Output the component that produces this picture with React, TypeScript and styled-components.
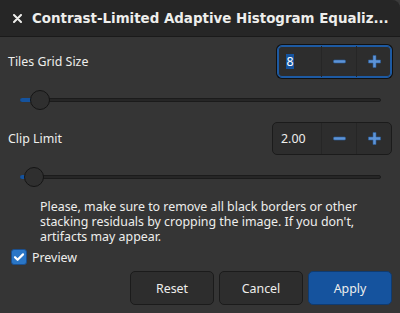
import styled, { createGlobalStyle } from 'styled-components';

const GlobalStyle = createGlobalStyle`
  html, body {
    margin: 0;
    padding: 0;
    background: #3a3a3a;
  }
  * {
    box-sizing: border-box;
  }
`;

function SpinButton({ value, focused, width }: { value: string; focused?: boolean; width: number }) {
  return (
    <Spin $focused={focused}>
      <SpinEntry $width={width}>{focused ? <Selected>{value}</Selected> : value}</SpinEntry>
      <SpinBtn>
        <svg width="13" height="13" viewBox="0 0 13 13">
          <rect x="0.5" y="5" width="12" height="3" rx="1" fill="#5d93d6" stroke="#2c5f9e" strokeWidth="0.6" />
        </svg>
      </SpinBtn>
      <SpinBtn>
        <svg width="13" height="13" viewBox="0 0 13 13">
          <path d="M5 0.5h3v4.5h4.5v3H8v4.5H5V8H0.5V5H5z" fill="#5d93d6" stroke="#2c5f9e" strokeWidth="0.6" />
        </svg>
      </SpinBtn>
    </Spin>
  );
}

function Slider({ knob, height }: { knob: number; height: number }) {
  return (
    <SliderRow $height={height}>
      <Track>
        <Fill $width={knob} />
        <Knob $left={knob} />
      </Track>
    </SliderRow>
  );
}

export default function App() {
  return (
    <>
      <GlobalStyle />
      <Dialog>
        <TitleBar>
          <Close>
            <svg width="9" height="9" viewBox="0 0 9 9">
              <path d="M1 1l7 7M8 1L1 8" stroke="#eeeeec" strokeWidth="2" strokeLinecap="round" />
            </svg>
          </Close>
          <Title>Contrast-Limited Adaptive Histogram Equaliz...</Title>
        </TitleBar>
        <Content>
          <SettingRow>
            <Label>Tiles Grid Size</Label>
            <SpinButton value="8" focused width={43} />
          </SettingRow>
          <Slider knob={19} height={44} />
          <SettingRow>
            <Label>Clip Limit</Label>
            <SpinButton value="2.00" width={48} />
          </SettingRow>
          <Slider knob={13} height={43} />
          <Note>
            Please, make sure to remove all black borders or other
            <br />
            stacking residuals by cropping the image. If you don't,
            <br />
            artifacts may appear.
          </Note>
          <CheckRow>
            <CheckBox>
              <svg width="12" height="12" viewBox="0 0 12 12">
                <path d="M2 6.2l2.6 2.6L10 3.4" stroke="#ffffff" strokeWidth="2.2" fill="none" strokeLinecap="round" strokeLinejoin="round" />
              </svg>
            </CheckBox>
            <Label>Preview</Label>
          </CheckRow>
          <ButtonRow>
            <Button>Reset</Button>
            <Button>Cancel</Button>
            <Button $primary>Apply</Button>
          </ButtonRow>
        </Content>
      </Dialog>
    </>
  );
}

const Dialog = styled.div`
  width: 400px;
  height: 313px;
  background: #353535;
  border-top-right-radius: 8px;
  overflow: hidden;
  display: flex;
  flex-direction: column;
  font-family: 'Noto Sans', 'Open Sans', sans-serif;
  color: #eeeeec;
`;

const TitleBar = styled.div`
  height: 37px;
  flex-shrink: 0;
  background: #262626;
  border-bottom: 1px solid #1a1a1a;
  display: flex;
  align-items: center;
  padding-left: 13px;
  gap: 10px;
`;

const Close = styled.div`
  width: 9px;
  height: 9px;
  display: flex;
`;

const Title = styled.div`
  font-family: 'DejaVu Sans', sans-serif;
  font-weight: bold;
  font-size: 13.4px;
  white-space: nowrap;
  color: #eeeeec;
`;

const Content = styled.div`
  flex: 1;
  padding: 8px 8px 8px 8px;
  display: flex;
  flex-direction: column;
`;

const SettingRow = styled.div`
  display: flex;
  align-items: center;
  justify-content: space-between;
  height: 33px;
`;

const Label = styled.span`
  font-size: 12.4px;
  color: #eeeeec;
`;

const Spin = styled.div<{ $focused?: boolean }>`
  display: flex;
  height: 33px;
  border-radius: 5px;
  background: #2d2d2d;
  border: 1px solid ${(p) => (p.$focused ? '#1d5aa3' : '#1b1b1b')};
  box-shadow: ${(p) => (p.$focused ? '0 0 0 1px #111111, inset 0 0 0 1px #1d5aa3' : 'none')};
  overflow: hidden;
`;

const SpinEntry = styled.div<{ $width: number }>`
  width: ${(p) => p.$width}px;
  display: flex;
  align-items: center;
  padding-left: 8px;
  font-size: 12.4px;
`;

const Selected = styled.span`
  background: #15539e;
  color: #ffffff;
  padding: 0 0.5px;
  line-height: 15px;
`;

const SpinBtn = styled.div`
  width: 35px;
  border-left: 1px solid #262626;
  display: flex;
  align-items: center;
  justify-content: center;
`;

const SliderRow = styled.div<{ $height: number }>`
  height: ${(p) => p.$height}px;
  display: flex;
  align-items: center;
  padding: 0 11px 0 12px;
`;

const Track = styled.div`
  position: relative;
  flex: 1;
  height: 4px;
  border-radius: 2px;
  background: #262626;
  border: 1px solid #1b1b1b;
`;

const Fill = styled.div<{ $width: number }>`
  position: absolute;
  left: -1px;
  top: -1px;
  height: 4px;
  width: ${(p) => p.$width}px;
  border-radius: 2px;
  background: #15539e;
`;

const Knob = styled.div<{ $left: number }>`
  position: absolute;
  left: ${(p) => p.$left - 10}px;
  top: -9px;
  width: 20px;
  height: 20px;
  border-radius: 50%;
  background: #2f2f2f;
  border: 1px solid #151515;
`;

const Note = styled.div`
  font-size: 12.4px;
  line-height: 15px;
  padding-left: 32px;
  white-space: nowrap;
  height: 47px;
  padding-top: 1px;
`;

const CheckRow = styled.div`
  display: flex;
  align-items: center;
  gap: 5px;
  height: 24px;
  padding-left: 3px;
`;

const CheckBox = styled.div`
  width: 16px;
  height: 16px;
  border-radius: 3px;
  background: #2a76c6;
  border: 1px solid #1a4f8f;
  display: flex;
  align-items: center;
  justify-content: center;
`;

const ButtonRow = styled.div`
  margin-top: auto;
  display: flex;
  justify-content: flex-end;
  gap: 5px;
`;

const Button = styled.button<{ $primary?: boolean }>`
  width: 84px;
  height: 34px;
  border-radius: 5px;
  font-family: 'Noto Sans', sans-serif;
  font-size: 12.4px;
  color: #eeeeec;
  background: ${(p) => (p.$primary ? '#15539e' : '#2d2d2d')};
  border: 1px solid ${(p) => (p.$primary ? '#0f3b71' : '#1b1b1b')};
`;
